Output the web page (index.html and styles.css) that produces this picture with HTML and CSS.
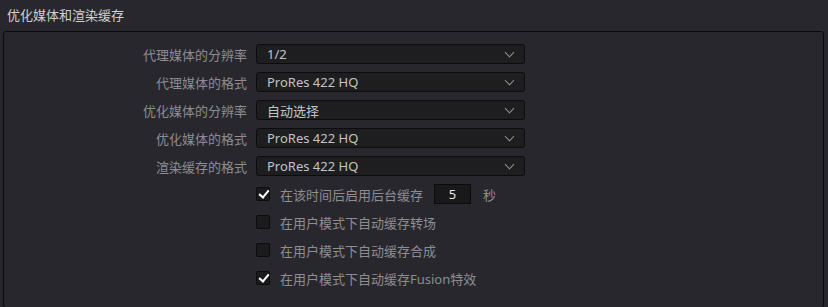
FILE: index.html
```html
<!DOCTYPE html>
<html lang="zh-CN">
<head>
    <meta charset="UTF-8">
    <title>优化媒体和渲染缓存</title>
    <link rel="stylesheet" href="styles.css">
</head>
<body>
    <div class="title">优化媒体和渲染缓存</div>
    <div class="panel">
        <div class="row">
            <label class="name">代理媒体的分辨率</label>
            <div class="select"><span>1/2</span><i class="chev"></i></div>
        </div>
        <div class="row">
            <label class="name">代理媒体的格式</label>
            <div class="select"><span>ProRes 422 HQ</span><i class="chev"></i></div>
        </div>
        <div class="row">
            <label class="name">优化媒体的分辨率</label>
            <div class="select"><span>自动选择</span><i class="chev"></i></div>
        </div>
        <div class="row">
            <label class="name">优化媒体的格式</label>
            <div class="select"><span>ProRes 422 HQ</span><i class="chev"></i></div>
        </div>
        <div class="row">
            <label class="name">渲染缓存的格式</label>
            <div class="select"><span>ProRes 422 HQ</span><i class="chev"></i></div>
        </div>
        <div class="row">
            <div class="name"></div>
            <div class="check on"></div>
            <span class="text">在该时间后启用后台缓存</span>
            <div class="num">5</div>
            <span class="text unit">秒</span>
        </div>
        <div class="row">
            <div class="name"></div>
            <div class="check"></div>
            <span class="text">在用户模式下自动缓存转场</span>
        </div>
        <div class="row">
            <div class="name"></div>
            <div class="check"></div>
            <span class="text">在用户模式下自动缓存合成</span>
        </div>
        <div class="row">
            <div class="name"></div>
            <div class="check on"></div>
            <span class="text">在用户模式下自动缓存Fusion特效</span>
        </div>
    </div>
</body>
</html>
```

FILE: styles.css
```css
html, body {
    margin: 0;
    height: 100%;
}
body {
    background-color: #28272d;
    font-family: "Noto Sans", "Noto Sans CJK SC", sans-serif;
    font-size: 13px;
    color: #8d8d92;
    overflow: hidden;
}
.title {
    height: 31px;
    line-height: 30px;
    padding-left: 7px;
    color: #cfcfd2;
}
.panel {
    margin: 0 4px 0 3px;
    height: 267px;
    border: 1px solid #0b0b0c;
    border-radius: 3px;
    padding-top: 8px;
}
.row {
    display: flex;
    align-items: center;
    height: 28px;
}
.name {
    width: 243px;
    flex: none;
    text-align: right;
    margin-right: 9px;
}
.select {
    width: 246px;
    height: 18px;
    background-color: #1e1e21;
    border: 1px solid #0c0c0d;
    border-radius: 3px;
    display: flex;
    align-items: center;
    justify-content: space-between;
    padding: 0 11px 0 10px;
    color: #c2c2c6;
}
.chev {
    width: 6px;
    height: 6px;
    border-right: 1.5px solid #8e8e92;
    border-bottom: 1.5px solid #8e8e92;
    transform: rotate(45deg);
    margin-top: -4px;
}
.check {
    width: 12px;
    height: 12px;
    flex: none;
    background-color: #1b1b1d;
    border: 1px solid #0d0d0e;
    border-radius: 2px;
    margin-left: 0;
    margin-right: 10px;
    position: relative;
}
.check.on::after {
    content: "";
    position: absolute;
    left: 4px;
    top: 0px;
    width: 4px;
    height: 8px;
    border-right: 2.5px solid #fff;
    border-bottom: 2.5px solid #fff;
    transform: rotate(40deg);
}
.text {
    color: #8d8d92;
}
.num {
    width: 35px;
    height: 18px;
    margin-left: 11px;
    background-color: #19191b;
    border: 1px solid #0b0b0c;
    color: #e8e8ea;
    text-align: center;
    line-height: 18px;
}
.unit {
    margin-left: 12px;
}
```
